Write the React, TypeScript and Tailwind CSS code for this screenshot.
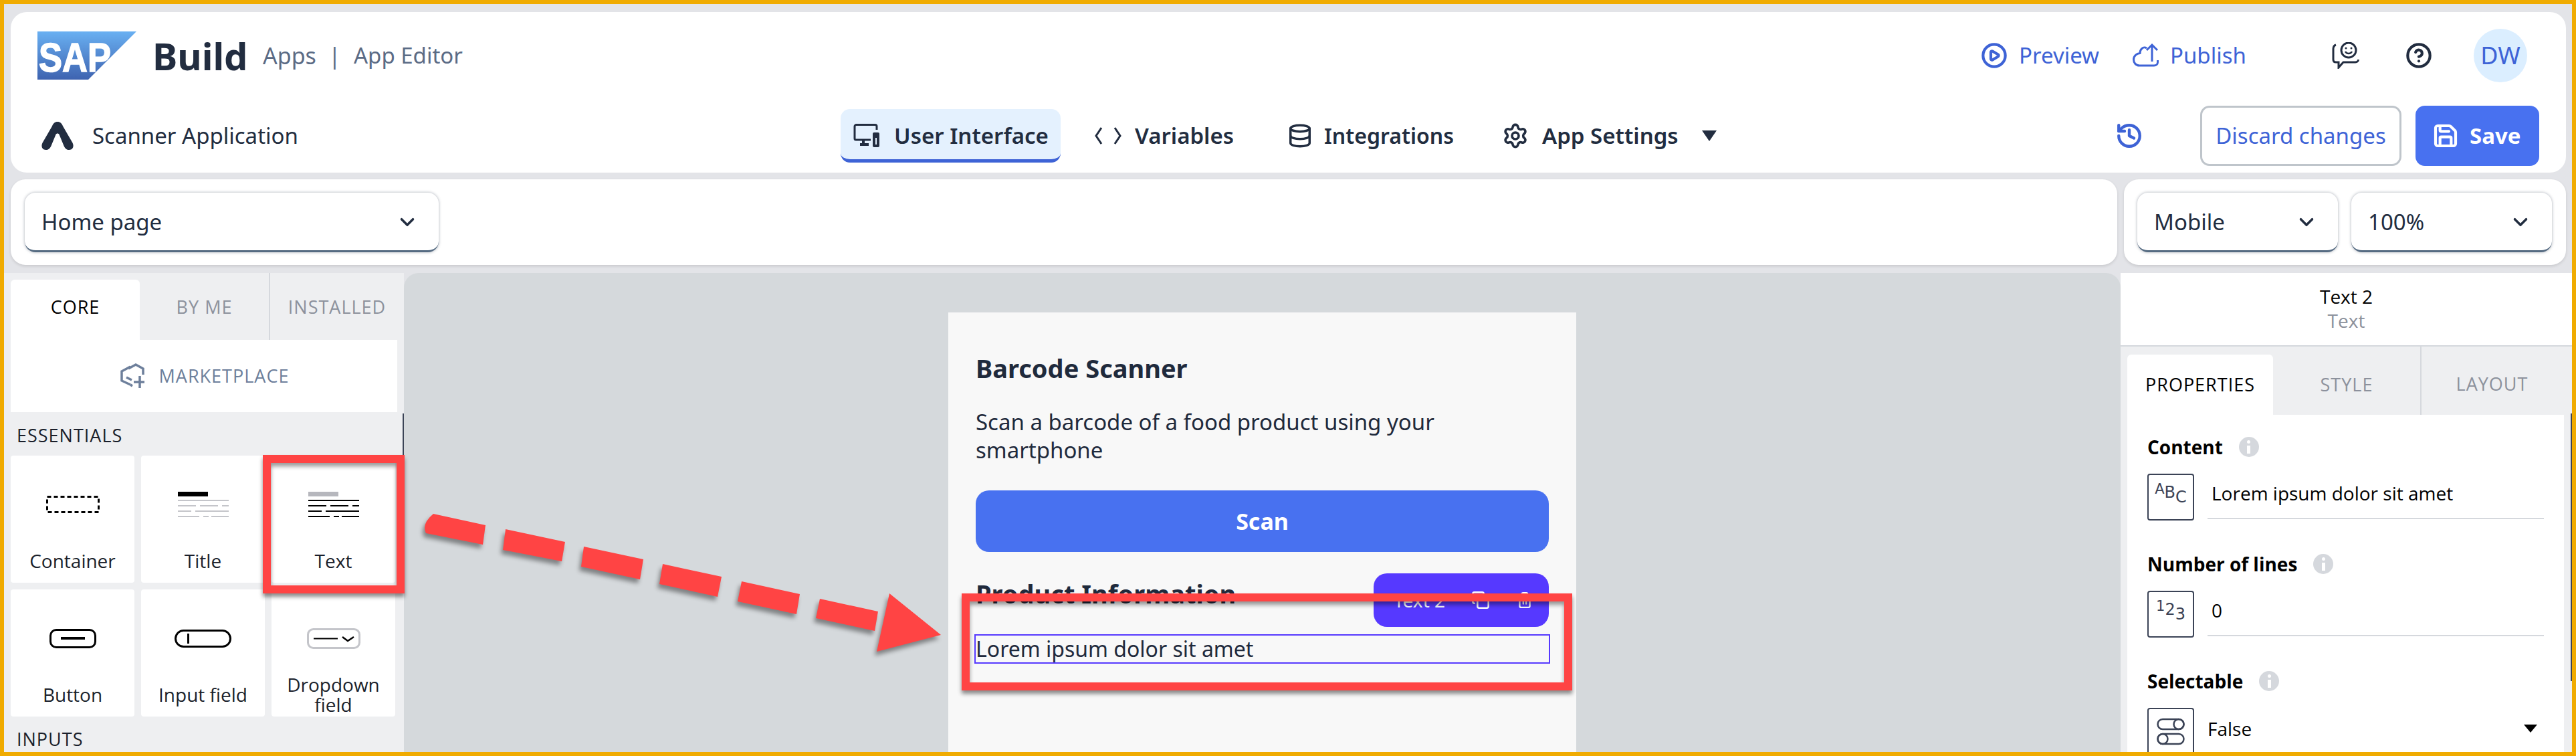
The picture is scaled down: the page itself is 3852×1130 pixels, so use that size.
import { ChevronDown, CirclePlay, CircleHelp, Copy, Database, History, Save, Settings, Trash2 } from 'lucide-react';

const widgetLabel = "text-[28px] leading-[30px] text-[#1a1f2b] text-center";

function SapLogo() {
  return (
    <svg width="148" height="72" viewBox="0 0 148 72">
      <defs>
        <linearGradient id="sapGrad" x1="0" y1="0" x2="0" y2="1">
          <stop offset="0" stopColor="#69b0f2" />
          <stop offset="1" stopColor="#3e63b0" />
        </linearGradient>
      </defs>
      <polygon points="0,0 148,0 76,72 0,72" fill="url(#sapGrad)" />
      <text x="2" y="60" fill="#fff" stroke="#fff" strokeWidth="1.5" fontFamily="Liberation Sans" fontWeight="700" fontSize="61" textLength="108" lengthAdjust="spacingAndGlyphs">SAP</text>
    </svg>
  );
}

function AppIcon() {
  return (
    <svg width="48" height="42" viewBox="0 0 48 42" fill="#222d40">
      <path d="M24 0c4 0 6.500 2.500 8 6.500l14.500 25c2.500 5 .5 10.500-5 10.500-4 0-6-2-8-6l-7-17c-1-2-4-2-5 0l-7 17c-2 4-4 6-8 6-5.500 0-7.500-5.500-5-10.500l14.500-25C17.500 2.500 20 0 24 0z" />
    </svg>
  );
}

function DeviceIcon() {
  return (
    <svg width="40" height="36" viewBox="0 0 40 36" fill="none" stroke="#222d40" strokeWidth="3">
      <path d="M35 9V4a2.500 2.500 0 0 0-2.500-2.500h-28A2.500 2.500 0 0 0 2 4v18a2 2 0 0 0 2 2h22" />
      <path d="M15 24v6M10 31h13" strokeWidth="4" />
      <rect x="29" y="13" width="10" height="22" rx="2" fill="#222d40" stroke="none" />
      <rect x="33" y="21" width="2" height="10" fill="#e4f1fe" stroke="none" />
    </svg>
  );
}

function CodeIcon() {
  return (
    <svg width="40" height="30" viewBox="0 0 40 30" fill="none" stroke="#222d40" strokeWidth="3">
      <path d="M10 3 2 15l8 12M30 3l8 12-8 12" />
    </svg>
  );
}

function PublishIcon() {
  return (
    <svg width="40" height="40" viewBox="0 0 40 40" fill="none" stroke="#3e63d6" strokeWidth="3">
      <path d="M22 9c-2-1.500-5-1.500-7 .500-2 1.500-3 4-3 7-5 .500-9.500 4-9.500 9.500 0 5 3.500 9 8.500 9h22c3 0 5.500-2 5.500-5v-3" />
      <path d="M30 29V4M22 12l8-8 8 8" />
    </svg>
  );
}

function FeedbackIcon() {
  return (
    <svg width="41" height="40" viewBox="0 0 41 40" fill="none" stroke="#222d40" strokeWidth="3">
      <path d="M6 4C3 5 2 7 2 10v16c0 2.500 1.500 4 4 4h4v8l7-8h18c3 0 4.500-2 4.500-4" />
      <circle cx="25" cy="12" r="11" />
      <circle cx="21" cy="9" r="1.500" fill="#222d40" stroke="none" />
      <circle cx="29" cy="9" r="1.500" fill="#222d40" stroke="none" />
      <path d="M20 14c2 4 8 4 10 0" strokeWidth="2.500" />
    </svg>
  );
}

function MarketplaceIcon() {
  return (
    <svg width="40" height="40" viewBox="0 0 40 40" fill="none" stroke="#6d7f9b" strokeWidth="3.500">
      <path d="M14 9 25 3l11 6v9M17 33 4 27V13l13-7" />
      <path d="M11 22l8 4M31 20v18M22 29h16" />
      <path d="M17 33l3 2" />
    </svg>
  );
}

function TextLinesIcon({ head, lines }: { head: string; lines: string }) {
  return (
    <svg width="76" height="38" viewBox="0 0 76 38">
      <rect x="0" y="0" width="45" height="7" fill={head} />
      <g fill={lines}>
        <rect x="0" y="12" width="76" height="2" />
        <rect x="0" y="20" width="27" height="2" /><rect x="33" y="20" width="27" height="2" /><rect x="66" y="20" width="10" height="2" />
        <rect x="0" y="28" width="20" height="2" /><rect x="26" y="28" width="50" height="2" />
        <rect x="0" y="36" width="32" height="2" /><rect x="38" y="36" width="8" height="2" /><rect x="50" y="36" width="26" height="2" />
      </g>
    </svg>
  );
}

function Widget({ label, icon }: { label: string; icon: React.ReactNode }) {
  return (
    <div className="h-[190px] rounded-[4px] bg-white flex flex-col items-center">
      <div className="mt-[53px] h-[40px] flex items-center justify-center">{icon}</div>
      <div className={`mt-[39px] h-[50px] px-4 flex items-center ${widgetLabel}`}>{label}</div>
    </div>
  );
}

function Dropdown({ label, className }: { label: string; className: string }) {
  return (
    <div className={`h-[89px] rounded-[16px] bg-white border-b-[3px] border-[#556b82] shadow-[0_0_4px_rgba(60,70,90,0.45)] flex items-center justify-between pl-[25px] pr-[30px] pt-[3px] ${className}`}>
      <span className="text-[33px] text-[#222d40]">{label}</span>
      <ChevronDown className="w-[34px] h-[34px] text-[#222d40]" strokeWidth={2.5} />
    </div>
  );
}

function Stair({ a, b, c }: { a: string; b: string; c: string }) {
  return (
    <div className="w-[70px] h-[70px] shrink-0 border-2 border-[#3b4356] rounded-[4px] flex justify-center pt-[7px] text-[#3b4356] text-[24px] leading-[28px] font-['DejaVu_Sans',sans-serif]">
      <span className="text-[21px]">{a}</span>
      <span className="mt-[5px]">{b}</span>
      <span className="mt-[12px]">{c}</span>
    </div>
  );
}

function FieldLabel({ label }: { label: string }) {
  return (
    <div className="h-[36px] flex items-center gap-[24px]">
      <span className="text-[28px] font-bold text-black">{label}</span>
      <div className="w-[30px] h-[30px] rounded-full bg-[#d5d8dd] flex flex-col items-center justify-center gap-[3px]">
        <div className="w-[5px] h-[5px] rounded-full bg-white" />
        <div className="w-[5px] h-[12px] bg-white" />
      </div>
    </div>
  );
}

export default function App() {
  return (
    <div className="relative w-[3852px] h-[1130px] overflow-hidden border-[6px] border-[#f0ab00] bg-[#e3e4e8] font-['Noto_Sans',sans-serif]">
      {/* top header card */}
      <div className="mt-[12px] ml-[10px] w-[3821px] h-[240px] rounded-[24px] bg-white pt-[25px]">
        <div className="h-[80px] flex items-center pl-[40px] pr-[58px]">
          <SapLogo />
          <span className="ml-[24px] w-[141px] text-[56px] font-bold leading-none text-[#222d40]">Build</span>
          <span className="ml-[24px] w-[98px] text-[34px] text-[#5b6b85]">Apps</span>
          <span className="w-[38px] text-[34px] text-[#5b6b85]">|</span>
          <span className="text-[33px] text-[#5b6b85]">App Editor</span>
          <CirclePlay className="ml-auto w-[40px] h-[40px] text-[#3e63d6]" strokeWidth={2.5} />
          <span className="ml-[17px] w-[120px] text-[33px] text-[#3e63d6]">Preview</span>
          <div className="ml-[49px]"><PublishIcon /></div>
          <span className="ml-[17px] w-[112px] text-[33px] text-[#3e63d6]">Publish</span>
          <div className="ml-[130px]"><FeedbackIcon /></div>
          <CircleHelp className="ml-[69px] w-[40px] h-[40px] text-[#222d40]" strokeWidth={2.5} />
          <div className="ml-[62px] w-[80px] h-[80px] rounded-full bg-[#dbeeff] flex items-center justify-center text-[36px] text-[#3e63d6]">DW</div>
        </div>
        <div className="mt-[35px] h-[90px] flex items-center pr-[40px]">
          <div className="w-[1241px] flex items-center pl-[46px]">
            <AppIcon />
            <span className="ml-[28px] text-[33px] text-[#222d40]">Scanner Application</span>
          </div>
          <div className="w-[329px] h-[80px] rounded-[14px] bg-[#e4f1fe] border-b-[5px] border-[#3e63d6] flex items-center pl-[19px] pt-[5px] gap-[21px]">
            <DeviceIcon />
            <span className="text-[33px] font-semibold text-[#222d40] whitespace-nowrap">User Interface</span>
          </div>
          <div className="ml-[51px]"><CodeIcon /></div>
          <span className="ml-[20px] w-[228px] text-[33px] font-semibold text-[#222d40]">Variables</span>
          <Database className="w-[38px] h-[40px] text-[#222d40]" strokeWidth={2.2} />
          <span className="ml-[17px] w-[266px] text-[32px] font-semibold text-[#222d40]">Integrations</span>
          <Settings className="w-[40px] h-[40px] text-[#222d40]" strokeWidth={2.2} />
          <span className="ml-[20px] w-[239px] text-[33px] font-semibold text-[#222d40] whitespace-nowrap">App Settings</span>
          <svg width="22" height="16" viewBox="0 0 22 16"><polygon points="0,0 22,0 11,16" fill="#222d40" /></svg>
          <History className="ml-auto w-[42px] h-[42px] text-[#3e63d6]" strokeWidth={2.5} />
          <div className="ml-[85px] w-[301px] h-[90px] rounded-[14px] border-[3px] border-[#bfc5cb] flex items-center justify-center text-[33px] text-[#3e63d6]">Discard changes</div>
          <div className="ml-[21px] w-[185px] h-[90px] rounded-[14px] bg-[#4871f0] flex items-center pl-[25px] gap-[16px] text-white">
            <Save className="w-[40px] h-[40px]" strokeWidth={2.5} />
            <span className="text-[33px] font-bold">Save</span>
          </div>
        </div>
      </div>

      {/* page / viewport selectors */}
      <div className="mt-[10px] ml-[10px] w-[3821px] h-[128px] flex gap-[10px]">
        <div className="w-[3150px] rounded-[22px] bg-white shadow-[0_2px_4px_rgba(0,0,0,0.12)] flex items-center pl-[21px]">
          <Dropdown label="Home page" className="w-[619px]" />
        </div>
        <div className="flex-1 rounded-[22px] bg-white shadow-[0_2px_4px_rgba(0,0,0,0.12)] flex items-center gap-[20px] pl-[20px]">
          <Dropdown label="Mobile" className="w-[300px]" />
          <Dropdown label="100%" className="w-[300px]" />
        </div>
      </div>

      {/* editor body */}
      <div className="mt-[12px] h-[716px] flex">
        {/* component library */}
        <div className="w-[598px] shrink-0 bg-[#eeeff1] font-['Open_Sans',sans-serif]">
          <div className="h-[100px] pl-[10px] flex items-end text-[27px] tracking-[1px]">
            <div className="w-[193px] h-[90px] rounded-t-[6px] bg-white flex items-center justify-center pb-[8px] text-black">CORE</div>
            <div className="w-[193px] h-[90px] flex items-center justify-center pb-[8px] text-[#8c919c]">BY ME</div>
            <div className="w-[202px] h-[100px] border-l-2 border-[#d5d8dd] flex items-center justify-center pt-[2px] text-[#8c919c]">INSTALLED</div>
          </div>
          <div className="ml-[10px] w-[578px] h-[108px] bg-white flex items-center justify-center gap-[20px] text-[27px] tracking-[1px] text-[#6d7f9b]">
            <MarketplaceIcon />
            <span>MARKETPLACE</span>
          </div>
          <div className="mt-[20px] ml-[19px] h-[30px] text-[27px] tracking-[1px] leading-[30px] text-[#1a1f2b]">ESSENTIALS</div>
          <div className="mt-[15px] ml-[10px] w-[575px] grid grid-cols-3 gap-[10px]">
            <Widget label="Container" icon={
              <svg width="80" height="26" viewBox="0 0 80 26" fill="none">
                <rect x="1.500" y="1.500" width="77" height="23" stroke="#000" strokeWidth="3" strokeDasharray="6 4" />
              </svg>
            } />
            <Widget label="Title" icon={<TextLinesIcon head="#000" lines="#c4c5ca" />} />
            <Widget label="Text" icon={<TextLinesIcon head="#b6b7bd" lines="#000" />} />
            <Widget label="Button" icon={<div className="w-[70px] h-[29px] rounded-[10px] border-[3px] border-black flex items-center justify-center"><div className="w-[36px] h-[4px] bg-black" /></div>} />
            <Widget label="Input field" icon={<div className="w-[85px] h-[27px] rounded-full border-[3px] border-black flex items-center pl-[16px]"><div className="w-[3px] h-[15px] bg-black" /></div>} />
            <Widget label="Dropdown field" icon={
              <svg width="80" height="31" viewBox="0 0 80 31" fill="none">
                <rect x="1.500" y="1.500" width="77" height="28" rx="8" stroke="#c4c5ca" strokeWidth="3" />
                <path d="M10 15.500h36" stroke="#000" strokeWidth="2" />
                <path d="M53 13l8 6 9-6" stroke="#000" strokeWidth="2.500" />
              </svg>
            } />
          </div>
          <div className="mt-[19px] ml-[19px] h-[30px] text-[27px] tracking-[1px] leading-[30px] text-[#1a1f2b]">INPUTS</div>
        </div>

        {/* canvas */}
        <div className="flex-1 rounded-t-[22px] bg-[#d5d9dc] pl-[814px] pt-[59px]">
          <div className="relative w-[939px] h-[700px] bg-[#f8f8f8] pl-[41px] pr-[41px] pt-[59px] text-[#1f2a3c]">
            <div className="h-[48px] text-[38px] leading-[48px] font-bold whitespace-nowrap">Barcode Scanner</div>
            <p className="mt-[36px] text-[33px] leading-[42px]">Scan a barcode of a food product using your smartphone</p>
            <div className="mt-[39px] h-[92px] rounded-[20px] bg-[#4871f0] flex items-center justify-center text-[34px] font-bold text-white">Scan</div>
            <div className="mt-[38px] h-[48px] text-[38px] leading-[48px] font-bold whitespace-nowrap">Product Information</div>
            <div className="mt-[37px] -ml-[2px] -mr-[2px] h-[44px] border-[2px] border-[#5639ff] flex items-center text-[32px] leading-none whitespace-nowrap">Lorem ipsum dolor sit amet</div>
            <div className="absolute left-[636px] top-[390px] w-[262px] h-[80px] rounded-[20px] bg-[#5639ff] flex items-center pl-[30px] text-white">
              <span className="w-[77px] text-[28px] whitespace-nowrap">Text 2</span>
              <Copy className="ml-[39px] w-[28px] h-[30px]" strokeWidth={2.2} />
              <Trash2 className="ml-[39px] w-[26px] h-[30px]" strokeWidth={2.2} />
            </div>
          </div>
        </div>

        {/* properties panel */}
        <div className="w-[675px] shrink-0 bg-white font-['Open_Sans',sans-serif]">
          <div className="h-[110px] border-b-2 border-[#d5d8dd] flex flex-col items-center pt-[17px] pr-[0px]">
            <div className="text-[28px] leading-[36px] text-black">Text 2</div>
            <div className="text-[28px] leading-[36px] text-[#8c919c]">Text</div>
          </div>
          <div className="h-[102px] bg-[#eeeff1] pl-[10px] flex items-end text-[27px] tracking-[1px]">
            <div className="w-[218px] h-[90px] rounded-t-[6px] bg-white flex items-center justify-center text-black">PROPERTIES</div>
            <div className="w-[220px] h-[90px] flex items-center justify-center text-[#8c919c]">STYLE</div>
            <div className="flex-1 h-[102px] border-l-2 border-[#d5d8dd] flex items-center justify-center pt-[10px] pr-[14px] text-[#8c919c]">LAYOUT</div>
          </div>
          <div className="h-[510px] bg-[#eeeff1] pl-[10px] pr-[12px]">
            <div className="h-full bg-white pl-[30px] pt-[30px] overflow-hidden">
              <FieldLabel label="Content" />
              <div className="mt-[22px] mb-[47px] flex gap-[20px]">
                <Stair a="A" b="B" c="C" />
                <div className="w-[503px] h-[68px] border-b-2 border-[#d5d8dd] flex items-center pl-[6px] pb-[8px] text-[28px] text-black whitespace-nowrap">Lorem ipsum dolor sit amet</div>
              </div>
              <FieldLabel label="Number of lines" />
              <div className="mt-[22px] mb-[47px] flex gap-[20px]">
                <Stair a="1" b="2" c="3" />
                <div className="w-[503px] h-[68px] border-b-2 border-[#d5d8dd] flex items-center pl-[6px] pb-[8px] text-[28px] text-black">0</div>
              </div>
              <FieldLabel label="Selectable" />
              <div className="mt-[22px] flex gap-[20px]">
                <div className="w-[70px] h-[70px] shrink-0 border-2 border-[#3b4356] rounded-[4px] flex items-center justify-center">
                  <svg width="42" height="42" viewBox="0 0 42 42" fill="none" stroke="#3b4356" strokeWidth="2.500">
                    <rect x="1.500" y="3" width="39" height="15" rx="7.500" /><circle cx="33" cy="10.500" r="7.500" />
                    <rect x="1.500" y="25" width="39" height="15" rx="7.500" /><circle cx="9" cy="32.500" r="7.500" />
                  </svg>
                </div>
                <div className="w-[503px] h-[62px] flex items-center justify-between pr-[10px] text-[28px] text-black">
                  <span>False</span>
                  <svg width="20" height="12" viewBox="0 0 20 12"><polygon points="0,0 20,0 10,12" fill="#000" /></svg>
                </div>
              </div>
            </div>
          </div>
        </div>
      </div>

      {/* scrollbars */}
      <div className="absolute left-[596px] top-[612px] w-[2px] h-[70px] bg-[#3b4356]" />
      <div className="absolute left-[3838px] top-[612px] w-[2px] h-[400px] bg-[#3b4356]" />

      {/* annotation overlays */}
      <div className="absolute left-[387px] top-[674px] w-[212px] h-[207px] border-[12px] border-[#ff4444] shadow-[0_5px_6px_rgba(0,0,0,0.45),inset_0_5px_6px_rgba(0,0,0,0.4)]" />
      <div className="absolute left-[1432px] top-[881px] w-[913px] h-[145px] border-[12px] border-[#ff4444] shadow-[0_5px_6px_rgba(0,0,0,0.45),inset_0_5px_6px_rgba(0,0,0,0.4)]" />
      <svg className="absolute left-[-6px] top-[-6px] drop-shadow-[-3px_6px_3px_rgba(0,0,0,0.4)]" width="3852" height="1130" viewBox="0 0 3852 1130" fill="#ff4444">
        <path d="M648 768 726 785 722 814 637 797Q630 783 648 768Z" />
        <polygon points="756,791 845,810 840,839 752,822" />
        <polygon points="873,817 962,836 957,866 869,847" />
        <polygon points="991,843 1079,862 1073,892 986,873" />
        <polygon points="1109,869 1196,888 1191,918 1103,899" />
        <polygon points="1226,895 1313,914 1308,943 1220,924" />
        <polygon points="1330,887 1407,949 1311,974" />
      </svg>
    </div>
  );
}
